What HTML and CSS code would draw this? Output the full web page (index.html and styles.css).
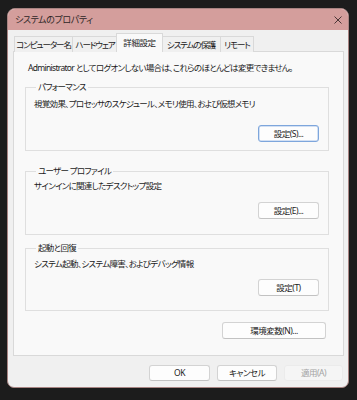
FILE: index.html
```html
<!DOCTYPE html>
<html lang="ja">
<head>
<meta charset="utf-8">
<title>システムのプロパティ</title>
<link rel="stylesheet" href="styles.css">
</head>
<body>
<div class="window">
  <div class="titlebar">
    <span class="title">システムのプロパティ</span>
    <svg class="close" width="8" height="8" viewBox="0 0 8 8"><path d="M0.5 0.5L7.5 7.5M7.5 0.5L0.5 7.5" stroke="#3a2a2a" stroke-width="0.9" fill="none"/></svg>
  </div>
  <div class="content">
    <div class="tabs">
      <div class="tab tab--name">コンピューター名</div>
      <div class="tab tab--hw">ハードウェア</div>
      <div class="tab tab--active">詳細設定</div>
      <div class="tab tab--protect">システムの保護</div>
      <div class="tab tab--remote">リモート</div>
    </div>
    <div class="panel">
      <p class="note">Administrator としてログオンしない場合は、これらのほとんどは変更できません。</p>
      <fieldset class="group group--perf">
        <legend>パフォーマンス</legend>
        <p class="desc">視覚効果、プロセッサのスケジュール、メモリ使用、および仮想メモリ</p>
        <div class="actions"><button class="btn btn--focus">設定(S)...</button></div>
      </fieldset>
      <fieldset class="group group--profile">
        <legend>ユーザー プロファイル</legend>
        <p class="desc">サインインに関連したデスクトップ設定</p>
        <div class="actions"><button class="btn">設定(E)...</button></div>
      </fieldset>
      <fieldset class="group group--startup">
        <legend>起動と回復</legend>
        <p class="desc">システム起動、システム障害、およびデバッグ情報</p>
        <div class="actions"><button class="btn">設定(T)</button></div>
      </fieldset>
      <div class="env-row"><button class="btn btn--wide">環境変数(N)...</button></div>
    </div>
    <div class="footer">
      <button class="btn btn--footer">OK</button>
      <button class="btn btn--footer">キャンセル</button>
      <button class="btn btn--footer btn--disabled">適用(A)</button>
    </div>
  </div>
</div>
</body>
</html>
```
FILE: styles.css
```css
* { box-sizing: border-box; }
html, body { margin: 0; }
body {
  background: #1c1c1c;
  width: 357px;
  height: 400px;
  overflow: hidden;
  padding: 8px 0 0 7px;
  font-family: "Noto Sans", "Noto Sans CJK JP", sans-serif;
  font-size: 8.5px;
  letter-spacing: -0.7px;
  color: #1b1b1b;
  font-feature-settings: "palt";
}
.window {
  width: 342px;
  height: 380px;
  border: 1px solid #a88482;
  border-radius: 8px 8px 7px 7px;
  overflow: hidden;
  background: #f0f0f0;
  display: flex;
  flex-direction: column;
}
.titlebar {
  height: 21px;
  background: #d49e9c;
  display: flex;
  align-items: center;
  justify-content: space-between;
  padding: 0 6px 0 7px;
  flex: none;
}
.title { color: #2e2626; font-size: 9px; letter-spacing: -0.4px; line-height: 12px; }
.close { display: block; }
.content {
  flex: 1;
  display: flex;
  flex-direction: column;
  padding: 4px 4px 0 5px;
}
.tabs {
  display: flex;
  align-items: flex-end;
  height: 18px;
  padding-left: 1px;
  position: relative;
  z-index: 1;
  margin-bottom: -1px;
}
.tab {
  height: 16px;
  line-height: 15px;
  padding: 0;
  text-align: center;
  border: 1px solid #d9d9d9;
  border-bottom: none;
  background: #f0f0f0;
  margin-right: -1px;
  white-space: nowrap;
  letter-spacing: -1.1px;
}
.tab--name { width: 59px; }
.tab--hw { width: 46px; }
.tab--protect { width: 60px; }
.tab--remote { width: 34px; }
.tab--active {
  width: 47px;
  height: 19px;
  line-height: 17px;
  background: #f9f9f9;
  margin: 0 -2px 0 -1px;
  position: relative;
  z-index: 2;
  letter-spacing: -0.4px;
}
.panel {
  height: 305px;
  border: 1px solid #d9d9d9;
  background: #f9f9f9;
  padding: 10px 14px 0 11px;
  display: flex;
  flex-direction: column;
}
.note {
  margin: 0 0 0 3px;
  line-height: 12px;
  white-space: nowrap;
}
.group {
  margin: 0;
  border: 1px solid #dfdfdf;
  padding: 0 9px 0 8px;
  min-width: 0;
}
.group legend {
  padding: 0 2px;
  margin-left: 2px;
  line-height: 12px;
}
.desc { margin: 0; line-height: 12px; white-space: nowrap; }
.actions { display: flex; justify-content: flex-end; }
.group--perf { margin-top: 7px; padding-top: 5px; padding-bottom: 8px; }
.group--perf .actions { margin-top: 15px; }
.group--profile { margin-top: 14px; padding-top: 3px; padding-bottom: 15px; }
.group--profile .actions { margin-top: 10px; }
.group--startup { margin-top: 7px; padding-top: 4px; padding-bottom: 14px; }
.group--startup .actions { margin-top: 9px; }
.btn {
  font: inherit;
  letter-spacing: -0.5px;
  color: #1b1b1b;
  width: 61px;
  height: 17px;
  padding: 0;
  line-height: 14px;
  background: #fdfdfd;
  border: 1px solid #d3d3d3;
  border-bottom-color: #c2c2c2;
  border-radius: 3px;
  text-align: center;
  white-space: nowrap;
}
.btn--focus { border-color: #7ea6dc; box-shadow: inset 0 0 0 0.5px #a9c4ea; }
.env-row { display: flex; justify-content: flex-end; margin-top: 11px; padding-right: 3px; }
.btn--wide { width: 104px; }
.footer {
  display: flex;
  justify-content: flex-end;
  gap: 7px;
  margin-top: 9px;
  padding-right: 1px;
}
.btn--footer { width: 61px; height: 16px; }
.btn--footer:nth-child(2) { width: 60px; }
.btn--disabled {
  width: 59px;
  color: #a3a3a3;
  background: #f5f5f5;
  border-color: #ebebeb;
}
```
